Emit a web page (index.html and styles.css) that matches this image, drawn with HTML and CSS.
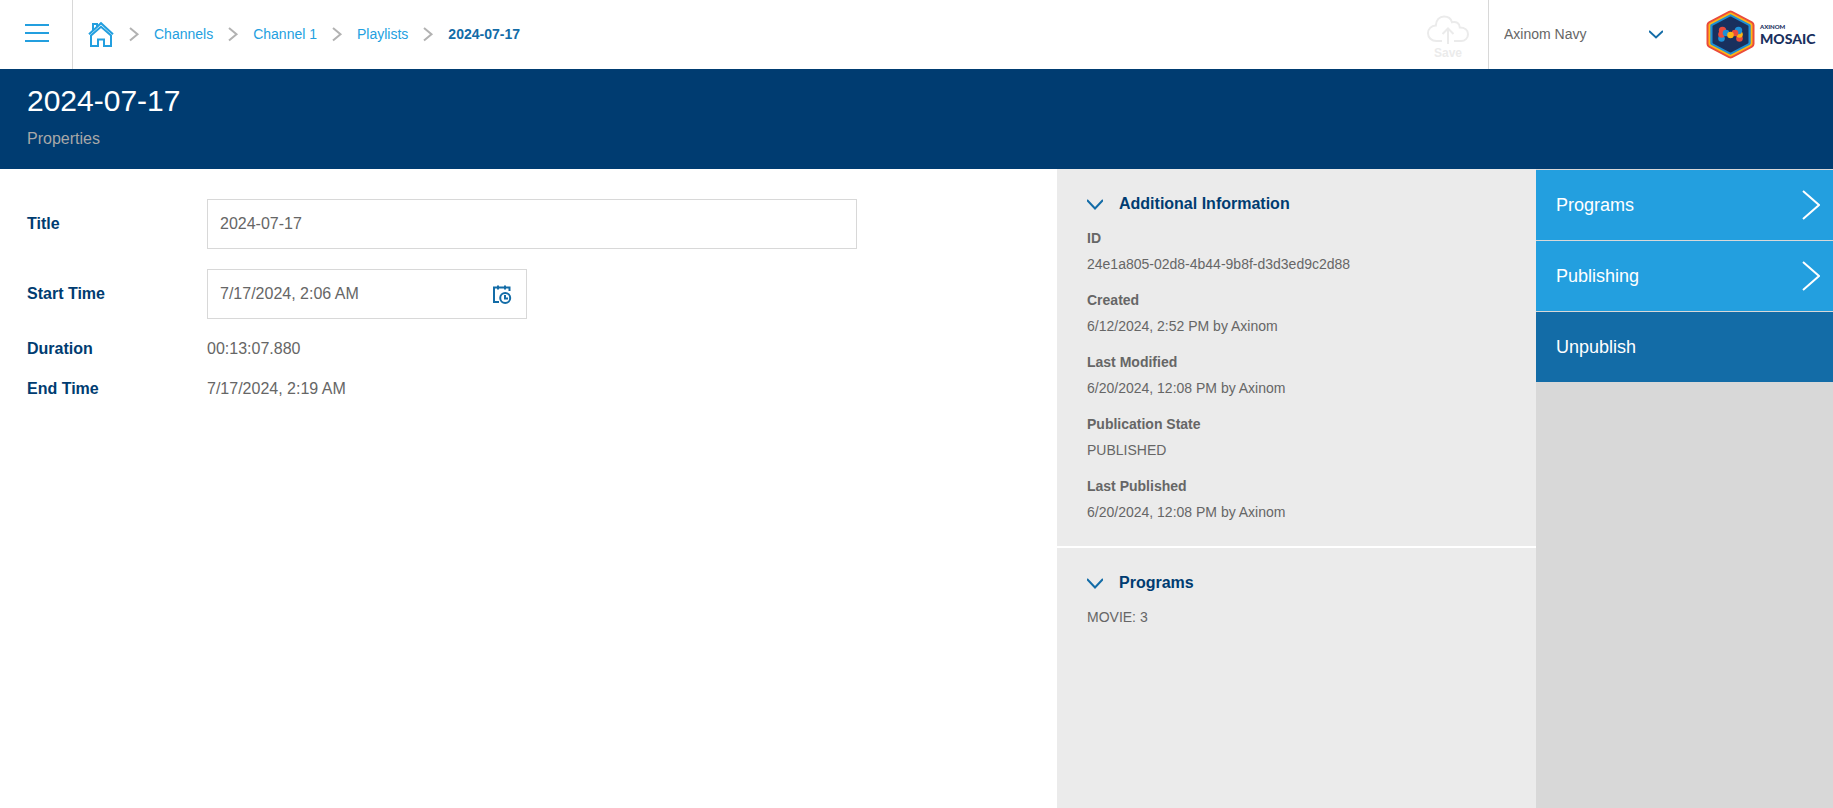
FILE: index.html
```html
<!DOCTYPE html>
<html lang="en">
<head>
  <meta charset="UTF-8" />
  <meta name="viewport" content="width=device-width, initial-scale=1.0"/>
  <title>2024-07-17 - Properties</title>
  <link rel="stylesheet" href="styles.css">
</head>
<body>
  <header class="topbar">
    <button class="menu-button" type="button" aria-label="Menu">
      <svg width="24" height="20" viewBox="0 0 24 20"><path d="M0 2h24M0 10h24M0 18h24"/></svg>
    </button>

    <nav class="breadcrumbs" aria-label="Breadcrumb">
      <a href="#" class="home" aria-label="Home">
        <svg width="26" height="28" viewBox="0 0 26 28">
          <path d="M1 14.200L13 3.200l12 11"/>
          <path d="M5 10V4h4v2.500"/>
          <path d="M3 15.500V26h7v-6.500h6V26h7V15.500L13 6.800z"/>
        </svg>
      </a>
      <svg class="separator" width="8" height="14" viewBox="0 0 8 14"><path d="M0 1l7.500 6.200L0 13.500"/></svg>
      <a href="#">Channels</a>
      <svg class="separator" width="8" height="14" viewBox="0 0 8 14"><path d="M0 1l7.500 6.200L0 13.500"/></svg>
      <a href="#">Channel 1</a>
      <svg class="separator" width="8" height="14" viewBox="0 0 8 14"><path d="M0 1l7.500 6.200L0 13.500"/></svg>
      <a href="#">Playlists</a>
      <svg class="separator" width="8" height="14" viewBox="0 0 8 14"><path d="M0 1l7.500 6.200L0 13.500"/></svg>
      <a href="#" class="current" aria-current="page">2024-07-17</a>
    </nav>

    <button class="save-button" type="button" disabled>
      <svg width="42" height="30" viewBox="0 0 42 30">
        <path d="M15 26H9.500C4.500 26 1 22.500 1 18.200c0-4.200 3.200-7.500 7.800-7.700C9 5 12.500 1.500 17 1.500c4 0 7 2.200 8 5.700 4.300-1.200 7.700 1.300 7.800 5.200 4.800 0 8.200 2.600 8.200 6.800 0 4-3 6.800-7 6.800h-7"/>
        <path d="M21 29V13.500M15.500 19l5.500-5.500 5.500 5.500"/>
      </svg>
      <span>Save</span>
    </button>

    <div class="tenant">
      <select aria-label="Tenant">
        <option>Axinom Navy</option>
      </select>
      <svg width="14" height="9" viewBox="0 0 14 9"><path d="M0 1l7 6.500L14 1"/></svg>
    </div>

    <a href="#" class="brand">
      <svg width="49" height="49" viewBox="0 0 49 49">
        <g stroke-linejoin="round">
          <path d="M24.500 4.500L44.500 15V34L24.500 44.500L4.500 34V15z" fill="#ea4b3c" stroke="#ea4b3c" stroke-width="8"/>
          <path d="M24.500 5L44 15.300V33.700L24.500 44L5 33.700V15.300z" fill="#fdb515" stroke="#fdb515" stroke-width="5"/>
          <path d="M24.500 5.800L43.200 15.700V33.300L24.500 43.200L5.800 33.300V15.700z" fill="#1c8fd6" stroke="#1c8fd6" stroke-width="3"/>
          <path d="M24.500 7.500L41.500 16.500V32.500L24.500 41.500L7.500 32.500V16.500z" fill="#19305e" stroke="#19305e" stroke-width="2"/>
        </g>
        <circle cx="15.500" cy="28.500" r="3.300" fill="#1c8fd6"/>
        <circle cx="33.500" cy="28.500" r="3.300" fill="#ea4b3c"/>
        <circle cx="15.500" cy="24.500" r="3.300" fill="#ea4b3c"/>
        <circle cx="33.500" cy="24.500" r="3.300" fill="#fdb515"/>
        <circle cx="16.500" cy="20.500" r="3.700" fill="#ea4b3c"/>
        <circle cx="32.500" cy="20.500" r="3.700" fill="#1c8fd6"/>
        <circle cx="20" cy="23" r="3.300" fill="#1c8fd6"/>
        <circle cx="29" cy="23" r="3.300" fill="#ea4b3c"/>
        <circle cx="24.500" cy="25" r="3.300" fill="#fdb515"/>
      </svg>
      <span class="brand-text">
        <span class="brand-small">AXINOM</span>
        <span class="brand-large">MOSAIC</span>
      </span>
    </a>
  </header>

  <div class="page-title">
    <h1>2024-07-17</h1>
    <p>Properties</p>
  </div>

  <main>
    <form class="details">
      <div class="row">
        <label for="title">Title</label>
        <input id="title" type="text" value="2024-07-17">
      </div>
      <div class="row">
        <label for="start-time">Start Time</label>
        <div class="date-field">
          <input id="start-time" type="text" value="7/17/2024, 2:06 AM">
          <button type="button" aria-label="Pick date and time">
            <svg width="20" height="20" viewBox="0 0 20 20">
              <path d="M7 18H2V3.500h15.500V7M6 1.500v4M13 1.500v4"/>
              <circle cx="13.200" cy="14" r="5"/>
              <path d="M13 11v3.500h3"/>
            </svg>
          </button>
        </div>
      </div>
      <div class="row">
        <span class="label">Duration</span>
        <span>00:13:07.880</span>
      </div>
      <div class="row">
        <span class="label">End Time</span>
        <span>7/17/2024, 2:19 AM</span>
      </div>
    </form>

    <aside class="info">
      <section>
        <button class="section-toggle" type="button" aria-expanded="true">
          <svg width="16" height="11" viewBox="0 0 16 11"><path d="M0 1l8 8.500L16 1"/></svg>
          Additional Information
        </button>
        <dl>
          <dt>ID</dt>
          <dd>24e1a805-02d8-4b44-9b8f-d3d3ed9c2d88</dd>
          <dt>Created</dt>
          <dd>6/12/2024, 2:52 PM by Axinom</dd>
          <dt>Last Modified</dt>
          <dd>6/20/2024, 12:08 PM by Axinom</dd>
          <dt>Publication State</dt>
          <dd>PUBLISHED</dd>
          <dt>Last Published</dt>
          <dd>6/20/2024, 12:08 PM by Axinom</dd>
        </dl>
      </section>
      <section>
        <button class="section-toggle" type="button" aria-expanded="true">
          <svg width="16" height="11" viewBox="0 0 16 11"><path d="M0 1l8 8.500L16 1"/></svg>
          Programs
        </button>
        <p>MOVIE: 3</p>
      </section>
    </aside>

    <div class="actions">
      <a href="#">
        Programs
        <svg width="18" height="30" viewBox="0 0 18 30"><path d="M1 1l16 14L1 29"/></svg>
      </a>
      <a href="#">
        Publishing
        <svg width="18" height="30" viewBox="0 0 18 30"><path d="M1 1l16 14L1 29"/></svg>
      </a>
      <button type="button">Unpublish</button>
    </div>
  </main>
</body>
</html>
```
FILE: styles.css
```css
:root {
  --navy: #003c71;
  --blue: #136ca7;
  --light-blue: #239fdf;
  --text: #666666;
  --border: #d8d8d8;
  --panel: #ebebeb;
}

* {
  box-sizing: border-box;
}

body {
  margin: 0;
  min-height: 100vh;
  display: flex;
  flex-direction: column;
  font-family: "Liberation Sans", Arial, sans-serif;
  font-size: 16px;
  line-height: 20px;
  color: var(--text);
  background: #ffffff;
}

h1, p, dl, dd {
  margin: 0;
}

a {
  color: var(--light-blue);
  text-decoration: none;
}

button, input, select {
  font: inherit;
  color: inherit;
  border: none;
  border-radius: 0;
  background: none;
}

button {
  padding: 0;
  cursor: pointer;
}

svg {
  display: block;
  flex: none;
  fill: none;
  stroke-width: 2;
}

/* top bar */

.topbar {
  display: flex;
  height: 69px;
  font-size: 14px;
}

.menu-button {
  width: 73px;
  padding: 0 0 3px 25px;
  border-right: 1px solid var(--border);
  stroke: var(--light-blue);
}

.breadcrumbs {
  flex: 1;
  display: flex;
  align-items: center;
  gap: 16px;
  padding: 0 0 2px 15px;
}

.home {
  stroke: var(--light-blue);
}

.separator {
  overflow: visible;
  stroke: #b2b2b2;
}

.current {
  color: var(--blue);
  font-weight: bold;
}

.save-button {
  display: flex;
  flex-direction: column;
  align-items: center;
  width: 80px;
  padding-top: 15px;
  font-size: 12px;
  font-weight: bold;
  line-height: 16px;
  color: #ebebeb;
  stroke: #ebebeb;
  cursor: default;
}

.save-button span {
  stroke: none;
}

.tenant {
  display: grid;
  align-items: center;
  width: 194px;
  border-left: 1px solid var(--border);
}

.tenant select,
.tenant svg {
  grid-area: 1 / 1;
}

.tenant select {
  appearance: none;
  height: 100%;
  padding: 0 48px 2px 15px;
}

.tenant svg {
  justify-self: end;
  margin-right: 19px;
  stroke: var(--blue);
  pointer-events: none;
}

.brand {
  display: flex;
  align-items: center;
  gap: 5px;
  padding: 0 16px 0 24px;
  color: #19305e;
}

.brand-text {
  display: flex;
  flex-direction: column;
  gap: 2px;
  width: 57px;
  font-family: Lato, sans-serif;
  font-weight: 900;
}

.brand-small {
  font-size: 6px;
  line-height: 6px;
}

.brand-large {
  font-size: 14px;
  line-height: 14px;
}

/* page title */

.page-title {
  padding: 14px 27px 20px;
  color: #ffffff;
  background: var(--navy);
}

.page-title h1 {
  margin-bottom: 11px;
  font-size: 30px;
  font-weight: normal;
  line-height: 35px;
}

.page-title p {
  color: #a8a8a8;
}

/* content */

main {
  flex: 1;
  display: flex;
}

.details {
  flex: 1;
  display: flex;
  flex-direction: column;
  gap: 20px;
  padding: 30px 27px;
}

.row {
  display: grid;
  grid-template-columns: 180px minmax(0, 650px);
  align-items: center;
}

.row label,
.label {
  color: var(--navy);
  font-weight: bold;
}

.row input {
  width: 100%;
  height: 50px;
  padding: 0 12px;
  border: 1px solid var(--border);
}

.date-field {
  display: flex;
  width: 320px;
  border: 1px solid var(--border);
}

.date-field input {
  flex: 1;
  height: 48px;
  border: none;
}

.date-field button {
  padding: 0 14px;
  stroke: var(--blue);
}

.info {
  width: 479px;
  background: var(--panel);
}

.info section {
  padding: 25px 30px 24px;
  font-size: 14px;
}

.info section + section {
  border-top: 2px solid #ffffff;
}

.section-toggle {
  display: flex;
  align-items: center;
  gap: 16px;
  margin-bottom: 14px;
  color: var(--navy);
  font-size: 16px;
  font-weight: bold;
}

.section-toggle svg {
  stroke: var(--blue);
}

.info dt {
  margin-bottom: 6px;
  font-weight: bold;
}

.info dd + dt {
  margin-top: 16px;
}

.actions {
  width: 297px;
  background: var(--border);
}

.actions a,
.actions button {
  display: flex;
  align-items: center;
  justify-content: space-between;
  width: 100%;
  height: 71px;
  padding: 0 13px 0 20px;
  border-top: 1px solid var(--border);
  color: #ffffff;
  font-size: 18px;
  background: var(--light-blue);
  stroke: #ffffff;
}

.actions button {
  background: var(--blue);
  stroke: none;
}
```
